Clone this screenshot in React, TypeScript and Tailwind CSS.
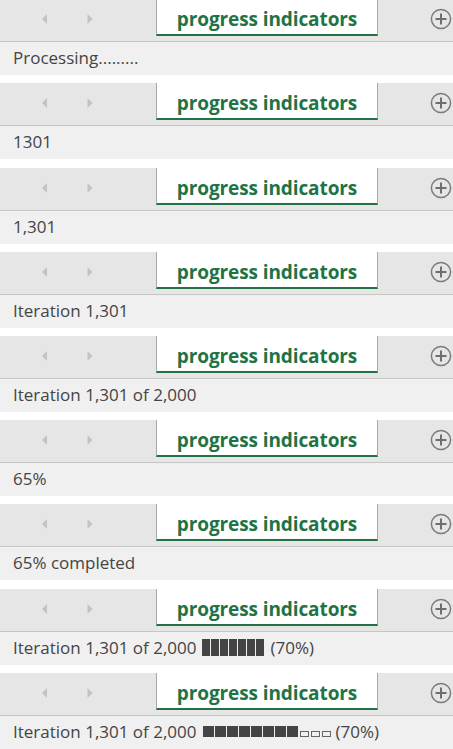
const rows: { text: string; bar?: 'solid' | 'squares' }[] = [
  { text: 'Processing.........' },
  { text: '1301' },
  { text: '1,301' },
  { text: 'Iteration 1,301' },
  { text: 'Iteration 1,301 of 2,000' },
  { text: '65%' },
  { text: '65% completed' },
  { text: 'Iteration 1,301 of 2,000', bar: 'solid' },
  { text: 'Iteration 1,301 of 2,000', bar: 'squares' },
]

// small extra gap under some blocks so the strips keep the 84.25px rhythm
const extra = [0, 1, 0, 0, 0, 0, 1, 0, 0]

function PlusIcon() {
  return (
    <svg width="22" height="22" viewBox="0 0 22 22">
      <circle cx="11" cy="11" r="9.6" fill="none" stroke="#7b7b7b" strokeWidth="1.5" />
      <path d="M11 5.5v11M5.5 11h11" stroke="#6e6e6e" strokeWidth="2" />
    </svg>
  )
}

function SheetBar({ first }: { first: boolean }) {
  return (
    <div className={`flex ${first ? 'h-[43px] -mt-[1px]' : 'h-[43px]'} border-b border-[#c6c6c6] bg-[#e6e6e6]`}>
      <div className="flex w-[156px] items-start">
        <svg width="6" height="10" viewBox="0 0 6 10" className="ml-[42px] mt-[15px]">
          <path d="M5 0v10L0 5z" fill="#c3c3c3" />
        </svg>
        <svg width="6" height="10" viewBox="0 0 6 10" className="ml-[39px] mt-[15px]">
          <path d="M0.5 0v10L5.5 5z" fill="#c3c3c3" />
        </svg>
      </div>
      <div className="flex h-[37px] w-[222px] items-center justify-center border-x border-b-2 border-x-[#a8a8a8] border-b-[#217346] bg-white pt-[5px]">
        <span className="font-['Open_Sans',sans-serif] text-[19px] font-bold tracking-[-0.1px] text-[#217346]">
          progress indicators
        </span>
      </div>
      <div className="flex flex-1 items-start justify-end pr-[1px] pt-[9px]">
        <PlusIcon />
      </div>
    </div>
  )
}

function SolidBar() {
  return (
    <span className="ml-[5px] mr-[7px] inline-flex gap-[1px]">
      {Array.from({ length: 7 }).map((_, i) => (
        <span key={i} className="inline-block h-[17px] w-[8px] bg-[#444]" />
      ))}
    </span>
  )
}

function SquareBar() {
  return (
    <span className="ml-[6px] mr-[5px] inline-flex items-center gap-[1px]">
      {Array.from({ length: 8 }).map((_, i) => (
        <span key={i} className="inline-block h-[11px] w-[11px] bg-[#444]" />
      ))}
      {Array.from({ length: 3 }).map((_, i) => (
        <span key={'e' + i} className="ml-[1px] mt-[4px] inline-block h-[6px] w-[9px] border border-[#666]" />
      ))}
    </span>
  )
}

export default function App() {
  return (
    <div className="w-[453px] overflow-hidden bg-white font-['Open_Sans',sans-serif]">
      {rows.map((r, i) => (
        <div key={i} style={{ paddingBottom: 8 + extra[i] }}>
          <SheetBar first={i === 0} />
          <div className="flex h-[33px] items-center bg-[#f0f0f0] pb-[2px] pl-[13px] text-[17px] text-[#444]">
            <span>{r.text}</span>
            {r.bar === 'solid' && <SolidBar />}
            {r.bar === 'squares' && <SquareBar />}
            {r.bar && <span>(70%)</span>}
          </div>
        </div>
      ))}
    </div>
  )
}
